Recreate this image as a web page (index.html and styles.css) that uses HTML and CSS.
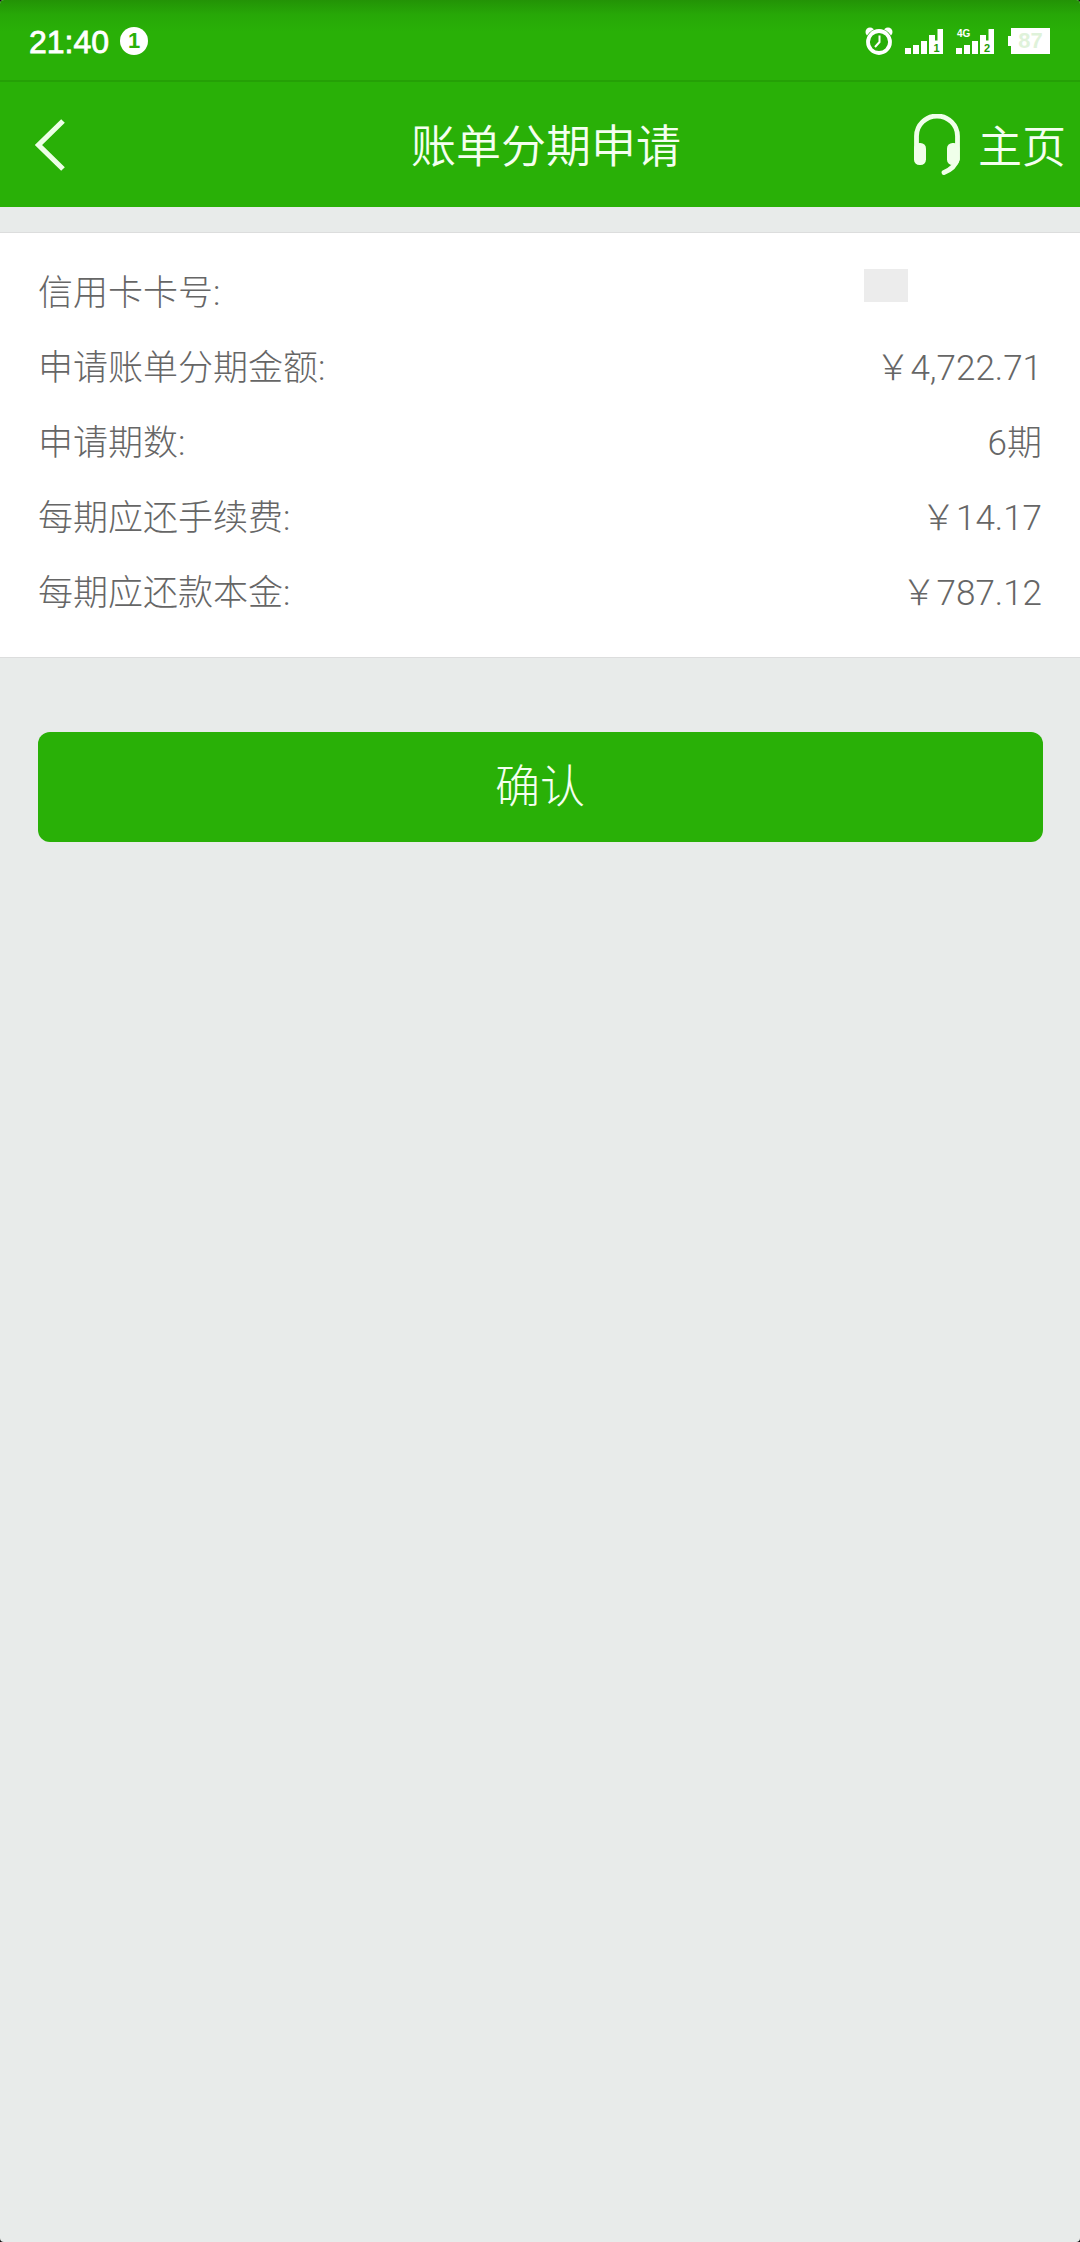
FILE: index.html
```html
<!DOCTYPE html>
<html lang="zh-CN">
<head>
    <meta charset="UTF-8">
    <meta name="viewport" content="width=device-width, initial-scale=1.0">
    <title>账单分期申请</title>
    <link rel="stylesheet" href="styles.css">
</head>
<body>
    <div class="page">
        <div class="status-bar">
            <span class="time">21:40</span>
            <span class="badge">1</span>
            <div class="status-icons">
                <svg class="alarm" width="28" height="30" viewBox="0 0 28 30">
                    <circle cx="5" cy="6" r="4.5" fill="#fff"/>
                    <circle cx="23" cy="6" r="4.5" fill="#fff"/>
                    <circle cx="14" cy="16" r="13.5" fill="#28ad07"/>
                    <circle cx="14" cy="16" r="11" fill="none" stroke="#fff" stroke-width="3.8"/>
                    <path d="M14.5 9.5V16L10 21" fill="none" stroke="#fff" stroke-width="2"/>
                </svg>
                <svg class="signal" width="38" height="27" viewBox="0 0 38 27">
                    <path d="M0 20h6v6H0zM8 17h6v9H8zM16 13h6v13h-6zM24 7h6v5.500h2.500V1H38v25H24z" fill="#fff"/>
                    <text x="28.500" y="24" class="sim">1</text>
                </svg>
                <svg class="signal" width="38" height="27" viewBox="0 0 38 27">
                    <path d="M0 20h6v6H0zM8 17h6v9H8zM16 13h6v13h-6zM24 7h6v5.500h2.500V1H38v25H24z" fill="#fff"/>
                    <text x="28" y="24" class="sim">2</text>
                    <text x="1" y="9" class="net">4G</text>
                </svg>
                <div class="battery">87</div>
            </div>
        </div>

        <div class="header">
            <svg class="back" width="32" height="54" viewBox="0 0 32 54">
                <path d="M29 3L4.500 27L29 51" fill="none" stroke="#edffe6" stroke-width="5.200"/>
            </svg>
            <h1>账单分期申请</h1>
            <svg class="headset" width="46" height="62" viewBox="0 0 46 62">
                <path d="M2.500 36V22a20.500 20 0 0 1 41 0V45Q41 54 30 58.500" fill="none" stroke="#f0ffea" stroke-width="4.800" stroke-linecap="round"/>
                <rect x="0" y="29" width="12" height="22" rx="5.500" fill="#f0ffea"/>
                <rect x="33" y="29" width="12.500" height="22" rx="5.500" fill="#f0ffea"/>
            </svg>
            <span class="home">主页</span>
        </div>

        <div class="card">
            <div class="row"><span>信用卡卡号:</span><span class="mask"></span></div>
            <div class="row"><span>申请账单分期金额:</span><span>&#xFFE5;4,722.71</span></div>
            <div class="row"><span>申请期数:</span><span>6期</span></div>
            <div class="row"><span>每期应还手续费:</span><span>&#xFFE5;14.17</span></div>
            <div class="row"><span>每期应还款本金:</span><span>&#xFFE5;787.12</span></div>
        </div>

        <button class="confirm">确认</button>
    </div>
</body>
</html>
```
FILE: styles.css
```css
* {
    box-sizing: border-box;
}
html {
    background-color: #111;
}
body {
    margin: 0;
    font-family: Roboto, "Noto Sans CJK SC", sans-serif;
    font-weight: 300;
}
.page {
    height: 2242px;
    overflow: hidden;
    border-radius: 4px;
    background-color: #e8ebea;
}
.status-bar {
    display: flex;
    align-items: center;
    height: 82px;
    padding: 2px 30px 0 29px;
    border-bottom: 2px solid #25a006;
    background: linear-gradient(#239306, #27a807 15px, #29b007 32px);
    color: #fff;
    font-family: "Liberation Sans", Arial, sans-serif;
}
.time {
    padding-top: 2px;
    font-size: 32px;
    font-weight: 400;
    -webkit-text-stroke: 0.8px #fff;
}
.badge {
    width: 28px;
    height: 28px;
    margin-left: 11px;
    border-radius: 50%;
    background-color: #fff;
    color: #29b007;
    font-size: 22px;
    font-weight: bold;
    line-height: 28px;
    text-align: center;
}
.status-icons {
    display: flex;
    align-items: center;
    margin-left: auto;
}
.signal {
    margin-left: 12px;
}
.signal + .signal {
    margin-left: 13px;
}
.sim {
    font-size: 11px;
    font-weight: bold;
    fill: #229a05;
}
.net {
    font-size: 10px;
    font-weight: bold;
    fill: #fff;
}
.battery {
    position: relative;
    width: 39px;
    height: 26px;
    margin-left: 17px;
    background-color: #fff;
    color: #dff2da;
    font-size: 22px;
    font-weight: bold;
    line-height: 26px;
    text-align: center;
}
.battery::before {
    content: "";
    position: absolute;
    top: 8px;
    left: -3px;
    width: 3px;
    height: 10px;
    background-color: #fff;
}
.header {
    display: flex;
    align-items: center;
    height: 125px;
    padding: 1px 14px 0 34px;
    background-color: #29b007;
    color: #f4fff0;
}
.header h1 {
    margin: 0 0 0 345px;
    padding-top: 5px;
    font-size: 45px;
    font-weight: 350;
    line-height: 66px;
}
.headset {
    margin-left: auto;
}
.home {
    margin-left: 18px;
    padding-top: 5px;
    font-size: 44px;
    font-weight: 350;
    line-height: 66px;
}
.card {
    height: 426px;
    margin-top: 25px;
    padding: 23px 38px 0;
    border: solid #dcdddd;
    border-width: 1px 0;
    background-color: #fff;
}
.row {
    display: flex;
    align-items: center;
    justify-content: space-between;
    height: 75px;
    color: #666;
    font-size: 35px;
    line-height: 52px;
}
.mask {
    width: 44px;
    height: 33px;
    margin: 0 134px 16px 0;
    background-color: #ececec;
}
.confirm {
    display: block;
    width: 1005px;
    height: 110px;
    margin: 74px auto 0;
    padding: 0 0 8px;
    border: none;
    border-radius: 12px;
    background-color: #29b007;
    color: #f4fff0;
    font-family: inherit;
    font-size: 45px;
    font-weight: 300;
    cursor: pointer;
}
```
